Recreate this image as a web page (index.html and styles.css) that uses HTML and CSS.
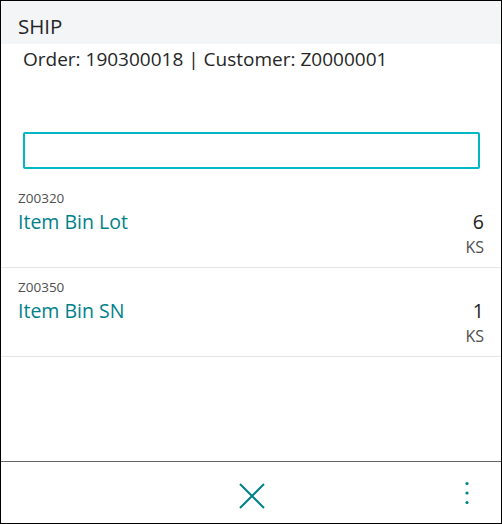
FILE: index.html
```html
<!DOCTYPE html>
<html lang="en">
<head>
  <meta charset="UTF-8">
  <meta name="viewport" content="width=device-width, initial-scale=1.0">
  <title>SHIP</title>
  <link rel="stylesheet" href="styles.css">
</head>
<body>
  <div class="app">
    <div class="header">SHIP</div>
    <div class="info">Order: 190300018 | Customer: Z0000001</div>

    <input type="text" class="scan" aria-label="Scan">

    <div class="list">
      <div class="row">
        <div class="code">Z00320</div>
        <div class="name">Item Bin Lot</div>
        <div class="qty">6</div>
        <div class="unit">KS</div>
      </div>
      <div class="row">
        <div class="code">Z00350</div>
        <div class="name">Item Bin SN</div>
        <div class="qty">1</div>
        <div class="unit">KS</div>
      </div>
    </div>

    <div class="footer">
      <button class="btn close" aria-label="Close">
        <svg width="26" height="26" viewBox="0 0 26 26">
          <path d="M1 1 L25 25 M25 1 L1 25" stroke="#00808a" stroke-width="2" fill="none"/>
        </svg>
      </button>
      <button class="btn more" aria-label="More">
        <svg width="6" height="24" viewBox="0 0 6 24">
          <circle cx="3" cy="2.5" r="1.6" fill="#00808a"/>
          <circle cx="3" cy="12" r="1.6" fill="#00808a"/>
          <circle cx="3" cy="21.5" r="1.6" fill="#00808a"/>
        </svg>
      </button>
    </div>
  </div>
</body>
</html>
```

FILE: styles.css
```css
* { box-sizing: border-box; }
body { margin: 0; font-family: "Open Sans", "Noto Sans", Arial, sans-serif; color: #212121; background: #fff; }
.app { width: 502px; height: 524px; border: 1px solid #000; display: flex; flex-direction: column; }
.header { height: 43px; padding: 11px 17px 0; font-size: 20.5px; line-height: 28px; background: #f4f5f7; color: #262626; }
.info { padding: 0 22px; font-size: 19px; line-height: 30px; color: #262626; }
.scan { display: block; margin: 58px 21px 10px 22px; height: 37px; border: 2px solid #00b7c3; border-radius: 2px; outline: none; font: inherit; }
.list { flex: 1; }
.row { display: grid; grid-template-columns: 1fr auto; align-content: start; height: 89px; padding: 10px 17px 0; border-bottom: 1px solid #e6e6e6; }
.code { grid-column: 1 / -1; font-size: 13.5px; line-height: 18px; color: #505050; }
.name { margin-top: 2px; font-size: 19.5px; line-height: 26px; color: #00818a; }
.qty { margin-top: 2px; font-size: 19.5px; line-height: 26px; text-align: right; color: #212121; }
.unit { grid-column: 2; margin-top: 1px; font-size: 16px; line-height: 22px; text-align: right; color: #505050; }
.footer { height: 62px; border-top: 1px solid #666; display: flex; align-items: center; justify-content: center; position: relative; }
.btn { background: none; border: none; padding: 0; cursor: pointer; display: flex; }
.close { margin-top: 6px; margin-left: 2px; }
.more { position: absolute; right: 31px; top: 19px; }
```
